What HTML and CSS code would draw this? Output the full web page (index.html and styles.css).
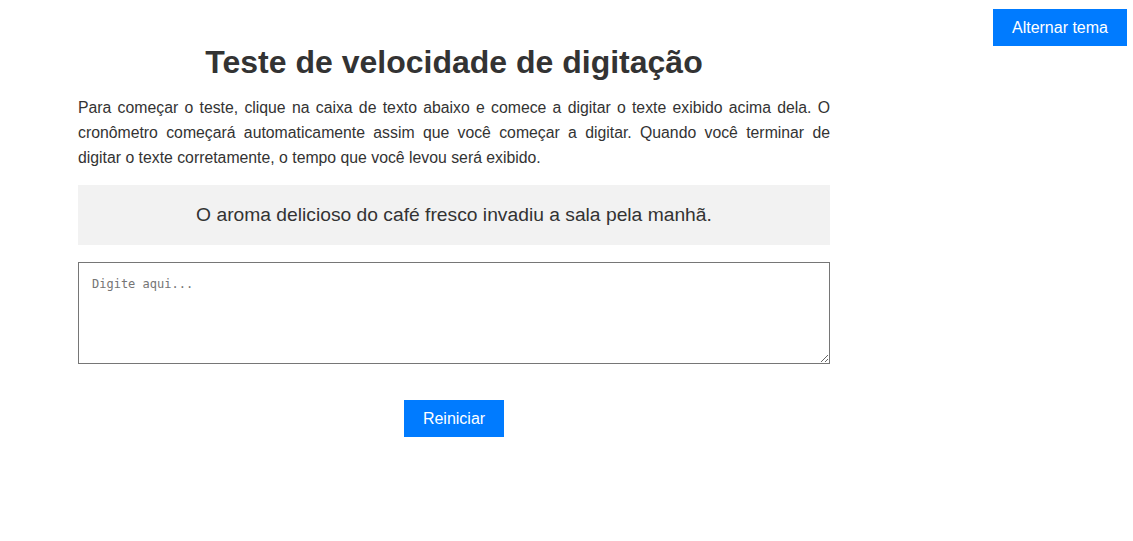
FILE: index.html
```html
<!DOCTYPE html>
<html lang="pt">
<head>
<meta charset="utf-8">
<title>Teste de velocidade de digitação</title>
<link rel="stylesheet" href="styles.css">
</head>
<body>
<div class="page">
  <main class="container">
    <h1 class="title">Teste de velocidade de digitação</h1>
    <p class="intro">Para começar o teste, clique na caixa de texto abaixo e comece a digitar o texte exibido acima dela. O cronômetro começará automaticamente assim que você começar a digitar. Quando você terminar de digitar o texte corretamente, o tempo que você levou será exibido.</p>
    <div class="sentence">O aroma delicioso do café fresco invadiu a sala pela manhã.</div>
    <textarea class="input" placeholder="Digite aqui..."></textarea>
    <div class="actions"><button class="btn">Reiniciar</button></div>
  </main>
  <button class="btn theme">Alternar tema</button>
</div>
</body>
</html>
```
FILE: styles.css
```css
html, body {
  margin: 0;
  padding: 0;
  background: #ffffff;
}
body {
  font-family: "Liberation Sans", Arial, sans-serif;
  color: #333333;
}
.page {
  display: flex;
  align-items: flex-start;
  padding: 9px 6px 0 78px;
}
.container {
  width: 752px;
  display: flex;
  flex-direction: column;
}
.title {
  margin: 35px 0 0;
  font-size: 32px;
  line-height: 37px;
  font-weight: bold;
  text-align: center;
  color: #333333;
}
.intro {
  margin: 14px 0 0;
  font-size: 15.8px;
  line-height: 25px;
  text-align: justify;
}
.sentence {
  margin-top: 15px;
  background: #f2f2f2;
  height: 60px;
  display: flex;
  align-items: center;
  justify-content: center;
  font-size: 19.25px;
}
.input {
  margin-top: 17px;
  box-sizing: border-box;
  width: 752px;
  height: 102px;
  border: 1px solid #767676;
  padding: 14px 13px;
  font-family: "DejaVu Sans Mono", monospace;
  font-size: 12px;
  resize: vertical;
}
.input::placeholder {
  color: #757575;
}
.actions {
  display: flex;
  justify-content: center;
  margin-top: 36px;
}
.btn {
  background: #007bff;
  color: #ffffff;
  border: none;
  font-family: "Liberation Sans", Arial, sans-serif;
  font-size: 16px;
  height: 37px;
  padding: 0 19px;
  cursor: pointer;
}
.theme {
  margin-left: auto;
  height: 37px;
  padding: 0 19px;
}
```
